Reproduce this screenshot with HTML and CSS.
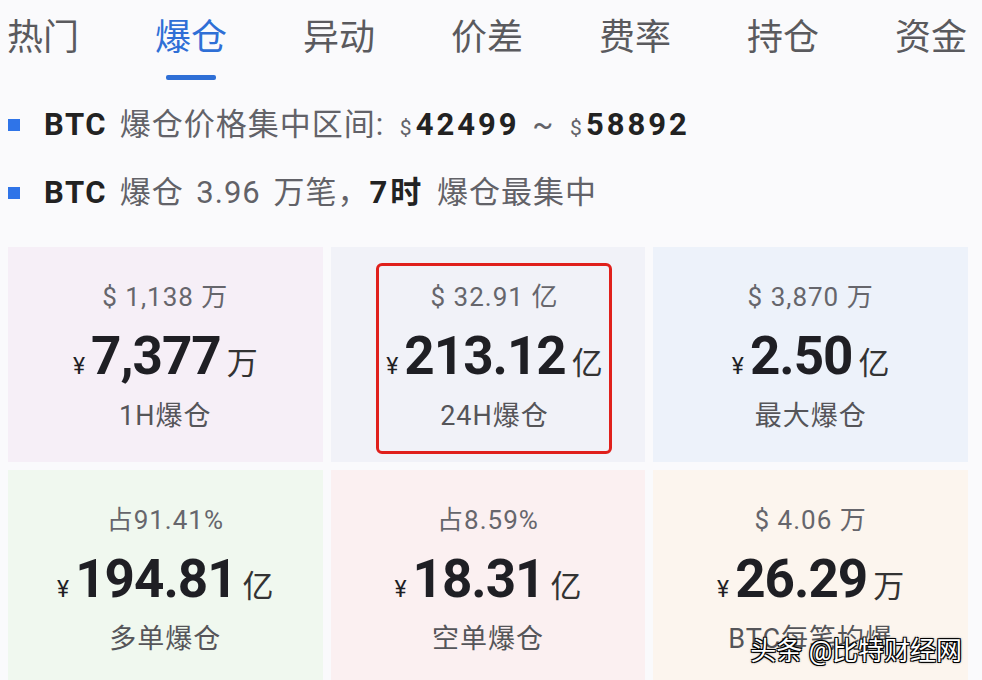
FILE: index.html
```html
<!DOCTYPE html>
<html lang="zh-CN">
<head>
    <meta charset="UTF-8">
    <meta name="viewport" content="width=device-width, initial-scale=1.0">
    <title>爆仓数据</title>
    <link rel="stylesheet" href="styles.css">
</head>
<body>
    <div class="page">
        <nav class="tabs">
            <div class="tab">热门</div>
            <div class="tab active">爆仓<span class="tab-bar"></span></div>
            <div class="tab">异动</div>
            <div class="tab">价差</div>
            <div class="tab">费率</div>
            <div class="tab">持仓</div>
            <div class="tab">资金</div>
        </nav>

        <ul class="notes">
            <li><b class="coin">BTC</b> 爆仓价格集中区间: <small>$</small><b>42499</b> ~ <small>$</small><b>58892</b></li>
            <li><b class="coin">BTC</b> 爆仓 3.96 万笔，<b>7时</b> 爆仓最集中</li>
        </ul>

        <div class="cards">
            <div class="card pink">
                <div class="card-body">
                    <div class="sub">$ 1,138 万</div>
                    <div class="amount"><span class="cur">¥</span><span class="num">7,377</span><span class="unit">万</span></div>
                    <div class="label">1H爆仓</div>
                </div>
            </div>
            <div class="card grey">
                <div class="card-body highlight">
                    <div class="sub">$ 32.91 亿</div>
                    <div class="amount"><span class="cur">¥</span><span class="num">213.12</span><span class="unit">亿</span></div>
                    <div class="label">24H爆仓</div>
                </div>
            </div>
            <div class="card blue">
                <div class="card-body">
                    <div class="sub">$ 3,870 万</div>
                    <div class="amount"><span class="cur">¥</span><span class="num">2.50</span><span class="unit">亿</span></div>
                    <div class="label">最大爆仓</div>
                </div>
            </div>
            <div class="card green">
                <div class="card-body">
                    <div class="sub">占91.41%</div>
                    <div class="amount"><span class="cur">¥</span><span class="num">194.81</span><span class="unit">亿</span></div>
                    <div class="label">多单爆仓</div>
                </div>
            </div>
            <div class="card rose">
                <div class="card-body">
                    <div class="sub">占8.59%</div>
                    <div class="amount"><span class="cur">¥</span><span class="num">18.31</span><span class="unit">亿</span></div>
                    <div class="label">空单爆仓</div>
                </div>
            </div>
            <div class="card peach">
                <div class="card-body">
                    <div class="sub">$ 4.06 万</div>
                    <div class="amount"><span class="cur">¥</span><span class="num">26.29</span><span class="unit">万</span></div>
                    <div class="label">BTC每笔均爆</div>
                </div>
            </div>
        </div>

        <div class="watermark">头条 @比特财经网</div>
    </div>
</body>
</html>
```

FILE: styles.css
```css
/* Liquidation overview */
body {
    margin: 0;
    background: #fafafc;
    font-family: Roboto, "Noto Sans CJK SC", sans-serif;
    color: #333;
    overflow: hidden;
}

.page {
    position: relative;
    width: 982px;
    height: 680px;
    overflow: hidden;
}

.tabs {
    display: flex;
    justify-content: space-between;
    padding: 17px 15px 0 7px;
    height: 64px;
}

.tab {
    display: flex;
    flex-direction: column;
    align-items: center;
    font-size: 36px;
    line-height: 42px;
    color: #5a5a5e;
}

.tab.active {
    color: #2f6fd6;
}

.tab-bar {
    width: 50px;
    height: 5px;
    margin-top: 16px;
    border-radius: 2px;
    background: #2f6fd6;
}

.notes {
    list-style: none;
    margin: 0;
    padding: 24px 0 0 8px;
}

.notes li {
    height: 40px;
    line-height: 40px;
    margin-bottom: 28px;
    font-size: 31px;
    letter-spacing: 1px;
    word-spacing: 4px;
    white-space: nowrap;
    color: #626268;
}

.notes li:last-child {
    margin-bottom: 34px;
}

.notes li::before {
    content: "";
    display: inline-block;
    vertical-align: middle;
    width: 12px;
    height: 12px;
    margin: -4px 24px 0 0;
    background: #2f74e8;
}

.notes b {
    color: #222;
    font-weight: bold;
    letter-spacing: 3px;
}

.notes b.coin {
    letter-spacing: 1.5px;
}

.notes small {
    font-size: 21px;
    margin: 0 3px 0 3px;
}

.cards {
    display: grid;
    grid-template-columns: repeat(3, 1fr);
    grid-auto-rows: 215px;
    gap: 8px;
    padding: 0 14px 0 8px;
}

.card {
    display: flex;
    justify-content: center;
    align-items: flex-start;
    padding-top: 16px;
}

.pink  { background: #f6eff7; }
.grey  { background: #f1f2f8; }
.blue  { background: #edf2fa; }
.green { background: #f0f8ef; }
.rose  { background: #fbf0f1; }
.peach { background: #fcf5ee; }

.card-body {
    display: flex;
    flex-direction: column;
    align-items: center;
    width: 230px;
    padding: 18px 0 0;
}

.highlight {
    margin-left: 13px;
    border: 3px solid #e0201c;
    border-radius: 6px;
    padding-top: 15px;
    height: 170px;
}

.sub {
    font-size: 26px;
    line-height: 32px;
    letter-spacing: 1px;
    color: #66666c;
}

.amount {
    display: flex;
    align-items: baseline;
    margin-top: 13px;
    line-height: 60px;
    color: #1f1f24;
}

.cur {
    font-size: 23px;
    margin-right: 6px;
}

.num {
    font-size: 53px;
    font-weight: bold;
    letter-spacing: -1px;
}

.unit {
    font-size: 31px;
    margin-left: 6px;
    color: #333;
}

.label {
    margin-top: 2px;
    font-size: 27px;
    line-height: 34px;
    letter-spacing: 1px;
    color: #555559;
}

.watermark {
    position: absolute;
    right: 20px;
    bottom: 13px;
    font-size: 26px;
    color: #fff;
    text-shadow: 1px 1px 0 #000, -1px -1px 0 #000, 1px -1px 0 #000, -1px 1px 0 #000, 0 0 3px #000;
}
```
